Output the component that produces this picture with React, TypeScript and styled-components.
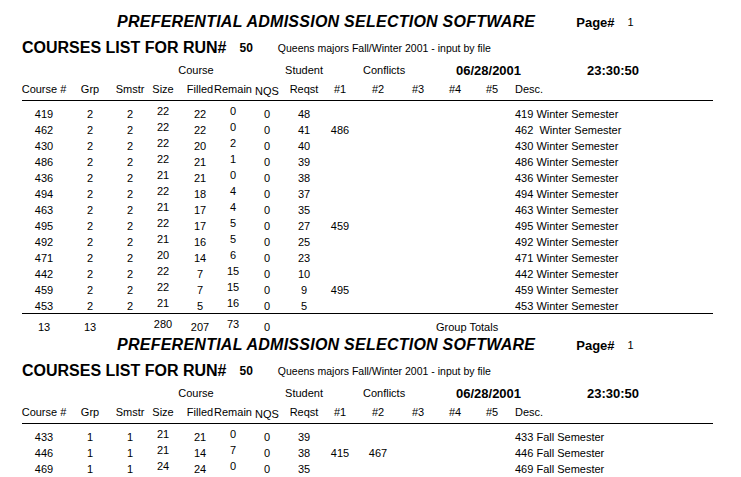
import styled, { createGlobalStyle } from "styled-components"

const GlobalStyle = createGlobalStyle`
    *, *::before, *::after { box-sizing: border-box; }
    html, body {
        margin: 0;
        padding: 0;
        background: #fff;
    }
    body {
        width: 741px;
        height: 477px;
        overflow: hidden;
        font-family: "Liberation Sans", Arial, sans-serif;
        color: #000;
    }
`

// column widths, measured from the printed report (starts at x=22)
const COLUMNS = "44px 48px 32px 34px 40px 26px 42px 32px 40px 36px 44px 30px 44px 1fr"

const Report = styled.div`
    width: 691px;
    margin-left: 22px;
    padding-top: 8px;
`
const PageBlock = styled.section`
    display: flex;
    flex-direction: column;
`
const TitleRow = styled.div`
    height: 28px;
    display: flex;
    align-items: center;
    padding-left: 95px;
    white-space: nowrap;
`
const Title = styled.h1`
    margin: 0;
    font-size: 16px;
    font-weight: bold;
    font-style: italic;
    letter-spacing: 0.25px;
`
const PageLabel = styled.span`
    margin-left: 41px;
    font-size: 13px;
    font-weight: bold;
`
const PageNumber = styled.span`
    margin-left: 13px;
    font-size: 11px;
`
const SubRow = styled.div`
    height: 24px;
    display: flex;
    align-items: center;
    white-space: nowrap;
`
const RunLabel = styled.h2`
    margin: 0;
    font-size: 16px;
    font-weight: bold;
`
const RunNumber = styled.span`
    margin-left: 13px;
    font-size: 12px;
    font-weight: bold;
`
const RunNote = styled.span`
    margin-left: 25px;
    font-size: 10.5px;
`
const GridRow = styled.div<{ $h: number }>`
    display: grid;
    grid-template-columns: ${COLUMNS};
    height: ${p => p.$h}px;
    font-size: 11px;
`
const Cell = styled.div<{ $left?: boolean, $span?: number, $indent?: number, $raise?: boolean, $drop?: boolean, $strong?: boolean }>`
    display: flex;
    align-items: center;
    justify-content: ${p => p.$left ? "flex-start" : "center"};
    grid-column: span ${p => p.$span ?? 1};
    padding-left: ${p => p.$indent ?? 0}px;
    padding-bottom: ${p => p.$raise ? 5 : 0}px;
    padding-top: ${p => p.$drop ? 5 : 0}px;
    font-size: ${p => p.$strong ? 13 : 11}px;
    font-weight: ${p => p.$strong ? "bold" : "normal"};
    white-space: pre;
    min-width: 0;
`
const Rule = styled.div<{ $top: number, $bottom: number }>`
    height: 0;
    border-top: 1px solid #000;
    margin-top: ${p => p.$top}px;
    margin-bottom: ${p => p.$bottom}px;
`
const Rows = styled.div`
    display: flex;
    flex-direction: column;
`

type Course = [string, string, string, string, string, string, string, string, string, string, string]

const winter: Course[] = [
    ["419", "2", "2", "22", "22", "0", "0", "48", "", "", "419 Winter Semester"],
    ["462", "2", "2", "22", "22", "0", "0", "41", "486", "", "462  Winter Semester"],
    ["430", "2", "2", "22", "20", "2", "0", "40", "", "", "430 Winter Semester"],
    ["486", "2", "2", "22", "21", "1", "0", "39", "", "", "486 Winter Semester"],
    ["436", "2", "2", "21", "21", "0", "0", "38", "", "", "436 Winter Semester"],
    ["494", "2", "2", "22", "18", "4", "0", "37", "", "", "494 Winter Semester"],
    ["463", "2", "2", "21", "17", "4", "0", "35", "", "", "463 Winter Semester"],
    ["495", "2", "2", "22", "17", "5", "0", "27", "459", "", "495 Winter Semester"],
    ["492", "2", "2", "21", "16", "5", "0", "25", "", "", "492 Winter Semester"],
    ["471", "2", "2", "20", "14", "6", "0", "23", "", "", "471 Winter Semester"],
    ["442", "2", "2", "22", "7", "15", "0", "10", "", "", "442 Winter Semester"],
    ["459", "2", "2", "22", "7", "15", "0", "9", "495", "", "459 Winter Semester"],
    ["453", "2", "2", "21", "5", "16", "0", "5", "", "", "453 Winter Semester"],
]

const fall: Course[] = [
    ["433", "1", "1", "21", "21", "0", "0", "39", "", "", "433 Fall Semester"],
    ["446", "1", "1", "21", "14", "7", "0", "38", "415", "467", "446 Fall Semester"],
    ["469", "1", "1", "24", "24", "0", "0", "35", "", "", "469 Fall Semester"],
]

const CourseRow = ({ c }: { c: Course }): JSX.Element =>
    <GridRow $h={16}>
        <Cell>{c[0]}</Cell>
        <Cell>{c[1]}</Cell>
        <Cell>{c[2]}</Cell>
        <Cell $raise>{c[3]}</Cell>
        <Cell>{c[4]}</Cell>
        <Cell $raise>{c[5]}</Cell>
        <Cell>{c[6]}</Cell>
        <Cell>{c[7]}</Cell>
        <Cell>{c[8]}</Cell>
        <Cell>{c[9]}</Cell>
        <Cell />
        <Cell />
        <Cell />
        <Cell $left $indent={1}>{c[10]}</Cell>
    </GridRow>

/**
 * One printed page of the courses list: headers, course rows and optional group totals
 */
const CoursePage = (props: { courses: Course[], totals?: string[] }): JSX.Element => {
    const t = props.totals
    return <PageBlock>
        <TitleRow>
            <Title>PREFERENTIAL ADMISSION SELECTION SOFTWARE</Title>
            <PageLabel>Page#</PageLabel>
            <PageNumber>1</PageNumber>
        </TitleRow>
        <SubRow>
            <RunLabel>COURSES LIST FOR RUN#</RunLabel>
            <RunNumber>50</RunNumber>
            <RunNote>Queens majors Fall/Winter 2001 - input by file</RunNote>
        </SubRow>
        <GridRow $h={20}>
            <Cell $span={3} />
            <Cell $span={3}>Course</Cell>
            <Cell />
            <Cell>Student</Cell>
            <Cell />
            <Cell $span={2} $left $indent={3}>Conflicts</Cell>
            <Cell $span={2} $left $indent={16} $strong>06/28/2001</Cell>
            <Cell $left $indent={73} $strong>23:30:50</Cell>
        </GridRow>
        <GridRow $h={16}>
            <Cell>Course #</Cell>
            <Cell>Grp</Cell>
            <Cell>Smstr</Cell>
            <Cell>Size</Cell>
            <Cell>Filled</Cell>
            <Cell>Remain</Cell>
            <Cell $drop>NQS</Cell>
            <Cell>Reqst</Cell>
            <Cell>#1</Cell>
            <Cell>#2</Cell>
            <Cell>#3</Cell>
            <Cell>#4</Cell>
            <Cell>#5</Cell>
            <Cell $left $indent={1}>Desc.</Cell>
        </GridRow>
        <Rule $top={4} $bottom={4} />
        <Rows>
            {props.courses.map(c => <CourseRow key={c[0]} c={c} />)}
        </Rows>
        {t && <>
            <Rule $top={0} $bottom={4} />
            <GridRow $h={13}>
                <Cell>{t[0]}</Cell>
                <Cell>{t[1]}</Cell>
                <Cell />
                <Cell $raise>{t[2]}</Cell>
                <Cell>{t[3]}</Cell>
                <Cell $raise>{t[4]}</Cell>
                <Cell>{t[5]}</Cell>
                <Cell $span={3} />
                <Cell $span={4} $left $indent={40}>Group Totals</Cell>
            </GridRow>
        </>}
    </PageBlock>
}

const App = (): JSX.Element =>
    <>
        <GlobalStyle />
        <Report>
            <CoursePage courses={winter} totals={["13", "13", "280", "207", "73", "0"]} />
            <CoursePage courses={fall} />
        </Report>
    </>

export default App
